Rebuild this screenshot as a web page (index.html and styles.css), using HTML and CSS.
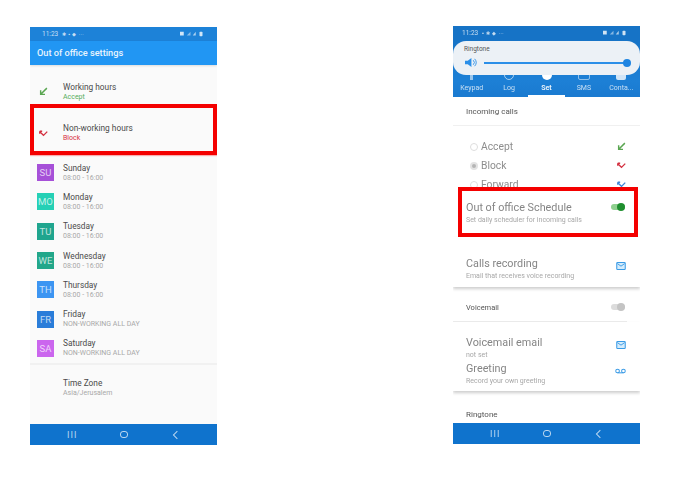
FILE: index.html
```html
<!DOCTYPE html>
<html lang="en">
<head>
    <meta name="viewport" content="width=device-width, initial-scale=1.0">
    <title>Out of office settings</title>
    <link rel="stylesheet" href="styles.css">
</head>
<body>
    <svg class="defs" width="0" height="0">
        <symbol id="i-accept" viewBox="0 0 12 12"><path d="M10.5 1.5 3 9M2.2 4.2V9.8H8" fill="none" stroke="#5aa651" stroke-width="1.9"/></symbol>
        <symbol id="i-block" viewBox="0 0 12 12"><path d="M1 3.5 4.5 7 6 8.5 11 3.5M1 3v3.2M1 3h3.2" fill="none" stroke="#d32f3f" stroke-width="1.8"/></symbol>
        <symbol id="i-forward" viewBox="0 0 12 12"><path d="M1 3.5 4.5 7 6 8.5 11 3.5M1 3v3.2M1 3h3.2" fill="none" stroke="#3f86d8" stroke-width="1.8"/></symbol>
        <symbol id="i-mail" viewBox="0 0 12 10"><rect x=".7" y=".7" width="10.6" height="8.6" rx="1" fill="#d5ecfb" stroke="#3a9be6" stroke-width="1.3"/><path d="M1.5 2 6 5.2 10.5 2" fill="none" stroke="#3a9be6" stroke-width="1.2"/></symbol>
        <symbol id="i-status" viewBox="0 0 34 8"><rect x="1" y="1" width="5" height="5" fill="#fff"/><path d="M10 6 15 1V6Z" fill="#fff" opacity=".6"/><path d="M18 6 22 1V6Z" fill="#fff" opacity=".8"/><rect x="27" y="1" width="4" height="6" rx="1" fill="#fff"/></symbol>
    </svg>

    <div class="phones">
        <!-- Schedule list -->
        <div class="phone phone-left">
            <div class="status status-left">
                <span>11:23</span>
                <span class="status-dots">✱ ▪ ◆ ···</span>
                <svg class="status-icons"><use href="#i-status"/></svg>
            </div>
            <div class="appbar">Out of office settings</div>

            <div class="row row-working">
                <svg class="call-icon"><use href="#i-accept"/></svg>
                <div>
                    <div class="title">Working hours</div>
                    <div class="sub green">Accept</div>
                </div>
            </div>
            <div class="row row-nonworking">
                <svg class="call-icon"><use href="#i-block"/></svg>
                <div>
                    <div class="title">Non-working hours</div>
                    <div class="sub red">Block</div>
                </div>
            </div>

            <div class="days">
                <div class="day">
                    <span class="badge su">SU</span>
                    <div><div class="title">Sunday</div><div class="sub">08:00 - 16:00</div></div>
                </div>
                <div class="day">
                    <span class="badge mo">MO</span>
                    <div><div class="title">Monday</div><div class="sub">08:00 - 16:00</div></div>
                </div>
                <div class="day">
                    <span class="badge tu">TU</span>
                    <div><div class="title">Tuesday</div><div class="sub">08:00 - 16:00</div></div>
                </div>
                <div class="day">
                    <span class="badge we">WE</span>
                    <div><div class="title">Wednesday</div><div class="sub">08:00 - 16:00</div></div>
                </div>
                <div class="day">
                    <span class="badge th">TH</span>
                    <div><div class="title">Thursday</div><div class="sub">08:00 - 16:00</div></div>
                </div>
                <div class="day">
                    <span class="badge fr">FR</span>
                    <div><div class="title">Friday</div><div class="sub">NON-WORKING ALL DAY</div></div>
                </div>
                <div class="day">
                    <span class="badge sa">SA</span>
                    <div><div class="title">Saturday</div><div class="sub">NON-WORKING ALL DAY</div></div>
                </div>
            </div>

            <div class="timezone">
                <div class="title">Time Zone</div>
                <div class="sub">Asia/Jerusalem</div>
            </div>

            <div class="navbar">
                <span class="nav-lines">III</span>
                <span class="nav-home"></span>
                <span class="nav-back"></span>
            </div>
        </div>

        <!-- Settings tab -->
        <div class="phone phone-right">
            <div class="status status-right">
                <span>11:23</span>
                <span class="status-dots">▪ ✱ ◆ ···</span>
                <svg class="status-icons"><use href="#i-status"/></svg>
            </div>
            <div class="tabs">
                <span class="tab"><i class="tab-icon keypad"></i>Keypad</span>
                <span class="tab"><i class="tab-icon log"></i>Log</span>
                <span class="tab active"><i class="tab-icon set"></i>Set</span>
                <span class="tab"><i class="tab-icon sms"></i>SMS</span>
                <span class="tab"><i class="tab-icon contacts"></i>Conta...</span>
            </div>

            <div class="volume">
                <div class="volume-label">Ringtone</div>
                <div class="volume-row">
                    <svg class="speaker" viewBox="0 0 14 12">
                        <path d="M1 4h3l4-3v10L4 8H1Z" fill="#2b8fe8"/>
                        <path d="M10 3.5a3.5 3.5 0 0 1 0 5M11.5 2a6 6 0 0 1 0 8" fill="none" stroke="#2b8fe8" stroke-width="1"/>
                    </svg>
                    <div class="slider"><span class="knob"></span></div>
                </div>
            </div>

            <div class="section-head">Incoming calls</div>
            <div class="options">
                <div class="option">
                    <span class="radio"></span><span class="option-name">Accept</span>
                    <svg class="call-icon"><use href="#i-accept"/></svg>
                </div>
                <div class="option">
                    <span class="radio checked"></span><span class="option-name">Block</span>
                    <svg class="call-icon"><use href="#i-block"/></svg>
                </div>
                <div class="option">
                    <span class="radio"></span><span class="option-name">Forward</span>
                    <svg class="call-icon"><use href="#i-forward"/></svg>
                </div>
            </div>

            <div class="schedule">
                <div class="setting-text">
                    <div class="big">Out of office Schedule</div>
                    <div class="sub">Set daily scheduler for incoming calls</div>
                </div>
                <span class="toggle on"></span>
            </div>

            <div class="card card-recording">
                <div class="setting">
                    <div class="setting-text">
                        <div class="big">Calls recording</div>
                        <div class="sub">Email that receives voice recording</div>
                    </div>
                    <svg class="mail"><use href="#i-mail"/></svg>
                </div>
            </div>

            <div class="voicemail">
                <span class="section-name">Voicemail</span>
                <span class="toggle"></span>
            </div>

            <div class="card card-voicemail">
                <div class="setting">
                    <div class="setting-text">
                        <div class="big">Voicemail email</div>
                        <div class="sub">not set</div>
                    </div>
                    <svg class="mail"><use href="#i-mail"/></svg>
                </div>
                <div class="setting">
                    <div class="setting-text">
                        <div class="big">Greeting</div>
                        <div class="sub">Record your own greeting</div>
                    </div>
                    <svg class="tape" viewBox="0 0 12 6">
                        <circle cx="2.8" cy="3" r="2" fill="none" stroke="#3a9be6" stroke-width="1.1"/>
                        <circle cx="9.2" cy="3" r="2" fill="none" stroke="#3a9be6" stroke-width="1.1"/>
                        <path d="M2.8 5h6.4" stroke="#3a9be6" stroke-width="1.1"/>
                    </svg>
                </div>
            </div>

            <div class="ringtone">Ringtone</div>

            <div class="navbar">
                <span class="nav-lines">III</span>
                <span class="nav-home"></span>
                <span class="nav-back"></span>
            </div>
        </div>
    </div>
</body>
</html>
```

FILE: styles.css
```css
:root {
    --blue: #2196f3;
    --nav: #0f73cd;
    --red: #f40000;
    --text: #4a4a4a;
    --muted: #a8a8a8;
}

html, body {
    margin: 0;
    height: 482px;
    overflow: hidden;
    background: white;
}

body {
    font-family: Roboto, "Liberation Sans", sans-serif;
    color: var(--text);
}

.defs {
    display: block;
    height: 0;
}

.phones {
    display: flex;
    align-items: flex-start;
    gap: 236px;
    padding: 26px 0 0 30px;
    filter: blur(0.5px);
}

.phone {
    position: relative;
    display: flex;
    flex-direction: column;
    width: 187px;
    height: 418px;
    overflow: hidden;
}

.phone-left {
    margin-top: 1px;
    background: #fafafa;
}

.phone-right {
    background: white;
}

/* status bar */
.status {
    display: flex;
    align-items: center;
    flex: none;
    height: 14px;
    padding: 0 12px;
    font-size: 6.5px;
    color: rgba(255, 255, 255, 0.75);
}

.status-left {
    background: #1d82d8;
}

.status-right {
    background: #1673c6;
    padding-left: 9px;
}

.status-dots {
    margin-left: 4px;
    font-size: 5px;
    letter-spacing: 0.5px;
}

.status-icons {
    width: 26px;
    height: 6px;
    margin-left: auto;
    opacity: 0.8;
}

.appbar {
    flex: none;
    height: 24px;
    padding-left: 7px;
    line-height: 23px;
    font-size: 9.2px;
    font-weight: 500;
    color: #eaf5fe;
    background: var(--blue);
    box-shadow: 0 1px 2px rgba(0, 0, 0, 0.12);
}

/* left list */
.title {
    font-size: 8.3px;
    line-height: 10px;
    color: var(--text);
}

.sub {
    font-size: 7px;
    line-height: 10px;
    color: var(--muted);
}

.green {
    color: #58ad5c;
}

.red {
    color: #d8323f;
}

.row {
    display: flex;
    align-items: center;
    flex: none;
    box-sizing: border-box;
}

.row .call-icon {
    margin: 0 15px 0 9px;
}

.row-working {
    height: 39px;
    padding-top: 14px;
}

.row-nonworking {
    height: 51px;
    padding-top: 11px;
    padding-bottom: 4px;
    border: 4px solid var(--red);
    box-shadow: 0 1px 1px rgba(244, 0, 0, 0.3);
}

.row-nonworking .call-icon {
    margin: 0 15px 0 5px;
}

.call-icon {
    flex: none;
    width: 9px;
    height: 9px;
}

.days {
    flex: none;
    padding-top: 3px;
    height: 205px;
    border-bottom: 2px solid #f1f1f1;
}

.day {
    display: flex;
    align-items: center;
    gap: 9px;
    height: 29.3px;
    padding-left: 7px;
}

.badge {
    flex: none;
    width: 17px;
    height: 17px;
    font-size: 9.5px;
    line-height: 17px;
    text-align: center;
    color: rgba(255, 255, 255, 0.72);
}

.su { background: #a650d8; }
.mo { background: #25d0b5; }
.tu { background: #1fa58e; }
.we { background: #22a78a; }
.th { background: #3c95f2; }
.fr { background: #2a7dd9; }
.sa { background: #cb66ee; }

.timezone {
    flex: none;
    padding: 13px 0 0 33px;
}

.navbar {
    display: flex;
    align-items: center;
    justify-content: center;
    gap: 43px;
    flex: none;
    height: 21px;
    margin-top: auto;
    color: rgba(255, 255, 255, 0.7);
    background: var(--nav);
}

.nav-lines {
    width: 10px;
    margin-right: 1px;
    font-size: 9px;
    letter-spacing: 1px;
    text-align: center;
}

.nav-home {
    box-sizing: border-box;
    width: 8px;
    height: 7px;
    margin-left: -1px;
    border: 1.2px solid rgba(255, 255, 255, 0.7);
    border-radius: 3px;
}

.nav-back {
    width: 5px;
    height: 5px;
    margin-left: 3px;
    border-left: 1.2px solid rgba(255, 255, 255, 0.7);
    border-bottom: 1.2px solid rgba(255, 255, 255, 0.7);
    transform: rotate(45deg);
}

/* right phone header */
.tabs {
    display: flex;
    flex: none;
    height: 57px;
    background: linear-gradient(#1673c6, #1d80d6 70%, #1a7ad0);
}

.tab {
    position: relative;
    flex: 1;
    padding-top: 30px;
    font-size: 7px;
    text-align: center;
    color: rgba(255, 255, 255, 0.75);
}

.tab.active {
    font-weight: 700;
    color: rgba(255, 255, 255, 0.9);
}

.tab.active::after {
    content: "";
    position: absolute;
    left: 0;
    right: 0;
    bottom: 0;
    height: 2px;
    background: white;
}

.tab-icon {
    display: block;
    box-sizing: border-box;
    width: 10px;
    height: 10px;
    margin: 0 auto 4px;
}

.keypad {
    width: 3px;
    background: rgba(255, 255, 255, 0.55);
}

.log {
    border: 1px solid rgba(255, 255, 255, 0.6);
    border-radius: 50%;
}

.set {
    border-radius: 50%;
    background: white;
}

.sms {
    width: 12px;
    border: 1px solid rgba(255, 255, 255, 0.5);
    border-radius: 2px;
}

.contacts {
    border-radius: 2px;
    background: rgba(255, 255, 255, 0.8);
}

.volume {
    position: absolute;
    top: 15px;
    left: 0;
    right: 0;
    box-sizing: border-box;
    height: 34px;
    padding: 4px 11px 0 11px;
    border-radius: 13px;
    background: rgb(236, 241, 246);
}

.volume-label {
    font-size: 6.5px;
    line-height: 9px;
    color: #555;
}

.volume-row {
    display: flex;
    align-items: center;
    gap: 7px;
    margin-top: 3px;
}

.speaker {
    flex: none;
    width: 13px;
    height: 11px;
}

.slider {
    position: relative;
    flex: 1;
    height: 2px;
    margin-right: 2px;
    background: #2b8fe8;
}

.knob {
    position: absolute;
    right: -4px;
    top: -3px;
    width: 8px;
    height: 8px;
    border-radius: 50%;
    background: #1f85e2;
}

/* right phone settings */
.section-head {
    flex: none;
    height: 28px;
    padding-left: 13px;
    line-height: 30px;
    font-size: 8px;
    color: #555;
    border-bottom: 1px solid #f0f0f0;
}

.options {
    flex: none;
    height: 50px;
    padding-top: 11px;
    overflow: hidden;
}

.option {
    display: flex;
    align-items: center;
    height: 19px;
    padding: 0 14px 0 17px;
}

.option-name {
    margin-left: 3px;
    font-size: 10.3px;
    color: #8d8d8d;
}

.option .call-icon {
    margin-left: auto;
}

.radio {
    box-sizing: border-box;
    width: 8px;
    height: 8px;
    border: 1px solid #ddd;
    border-radius: 50%;
}

.radio.checked {
    border: 2.5px solid #e3e3e3;
    background: #b5b5b5;
}

.schedule {
    display: flex;
    justify-content: space-between;
    flex: none;
    box-sizing: border-box;
    height: 50px;
    margin: 0 2px 0 5px;
    padding: 10px 9px 0 4px;
    border: 4px solid var(--red);
    background: white;
}

.schedule .toggle {
    margin-top: 3px;
}

.big {
    font-size: 10.8px;
    line-height: 14px;
    color: #858585;
}

.toggle {
    position: relative;
    flex: none;
    width: 14px;
    height: 6px;
    border-radius: 3px;
    background: #dcdcdc;
}

.toggle::after {
    content: "";
    position: absolute;
    right: 0;
    top: -1px;
    width: 8px;
    height: 8px;
    border-radius: 50%;
    background: #c4c4c4;
}

.toggle.on {
    background: #8fd08f;
}

.toggle.on::after {
    background: #1f8f2f;
}

.card {
    flex: none;
    box-sizing: border-box;
    box-shadow: 0 2px 3px rgba(0, 0, 0, 0.2);
}

.card-recording {
    height: 50px;
    padding-top: 20px;
}

.card-voicemail {
    height: 69px;
    padding-top: 14px;
}

.setting {
    display: flex;
    align-items: center;
    justify-content: space-between;
    height: 24px;
    margin-bottom: 2px;
    padding: 0 14px 0 13px;
}

.mail {
    flex: none;
    width: 10px;
    height: 8px;
    margin-bottom: 6px;
}

.tape {
    flex: none;
    width: 11px;
    height: 6px;
    margin-bottom: 6px;
}

.voicemail {
    display: flex;
    align-items: center;
    justify-content: space-between;
    flex: none;
    box-sizing: border-box;
    height: 35px;
    margin-right: 13px;
    padding: 6px 2px 0 13px;
    border-bottom: 1px solid #ececec;
}

.section-name {
    font-size: 7.5px;
    color: #555;
}

.ringtone {
    flex: none;
    padding: 19px 0 0 13px;
    font-size: 8px;
    line-height: 10px;
    color: #555;
}
```
